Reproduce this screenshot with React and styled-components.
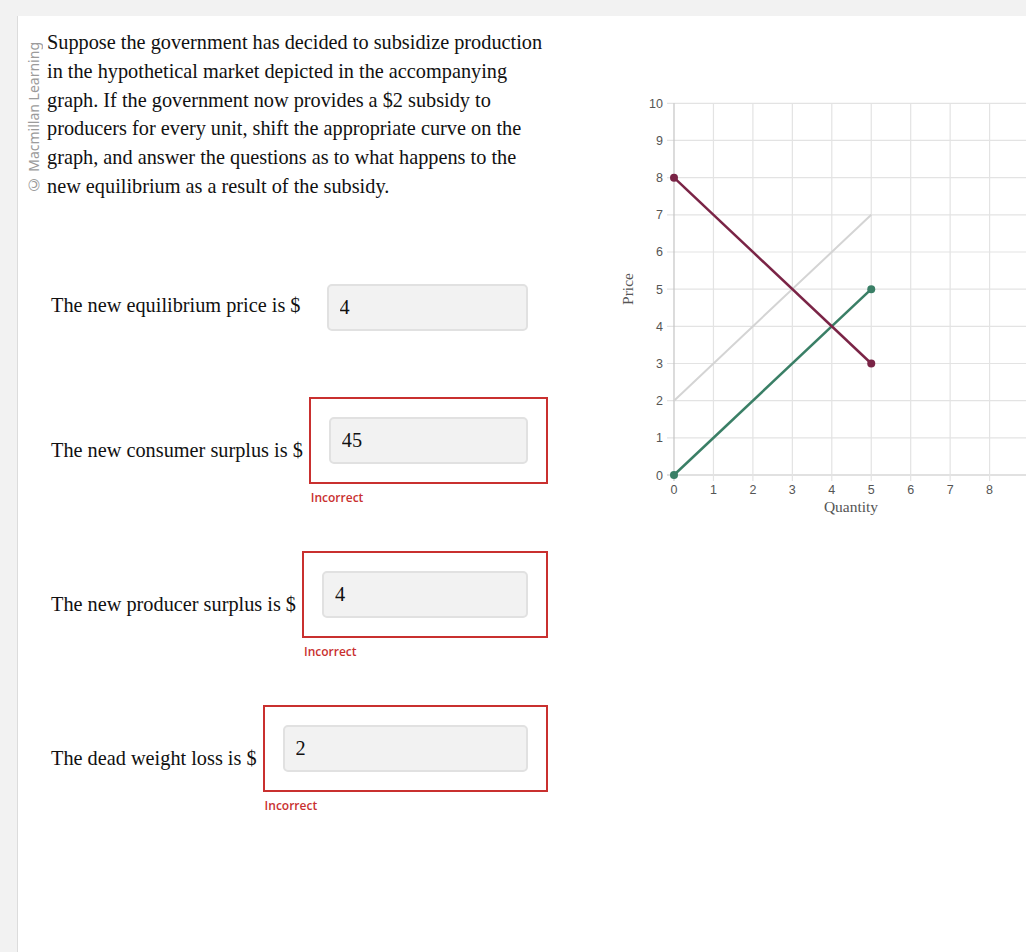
import React from "react";
import styled, { createGlobalStyle } from "styled-components";

const GlobalStyle = createGlobalStyle`
  html, body {
    margin: 0;
    padding: 0;
    background: #f2f2f2;
    overflow: hidden;
  }
  * { box-sizing: border-box; }
`;

const Page = styled.div`
  padding: 16px 0 0 17px;
  min-height: 952px;
`;

const Panel = styled.div`
  display: flex;
  align-items: flex-start;
  background: #ffffff;
  border-left: 1px solid #dcdcdc;
  min-height: 936px;
  width: 1009px;
  overflow: hidden;
`;

const Credit = styled.div`
  flex: 0 0 29px;
  display: flex;
  justify-content: center;
  padding: 26px 0 0 3px;
`;

const CreditText = styled.span`
  writing-mode: vertical-rl;
  transform: rotate(180deg);
  font-family: "Noto Sans", "Open Sans", "Liberation Sans", sans-serif;
  font-size: 14px;
  line-height: 14px;
  color: #9b9b9b;
  white-space: nowrap;
`;

const CopySign = styled.span`
  font-family: "DejaVu Sans", "Liberation Sans", sans-serif;
  font-size: 15px;
`;

const LeftCol = styled.div`
  flex: 0 0 513px;
  display: flex;
  flex-direction: column;
`;

const Prompt = styled.p`
  margin: 12px 0 0;
  width: 500px;
  font-family: "Liberation Serif", "Times New Roman", serif;
  font-size: 20.3px;
  line-height: 28.8px;
  color: #111;
`;

const QuestionList = styled.div`
  margin-top: 63px;
  display: flex;
  flex-direction: column;
  gap: 46px;
  width: 501px;
`;

const Row = styled.div`
  display: flex;
  align-items: flex-start;
  padding-left: 4px;
`;

const Label = styled.span`
  padding-top: ${(p) => p.$drop}px;
  font-family: "Liberation Serif", "Times New Roman", serif;
  font-size: 20.3px;
  line-height: 24px;
  color: #111;
  white-space: nowrap;
`;

const FieldCol = styled.div`
  flex: 1;
  margin-left: 6px;
  display: flex;
  flex-direction: column;
`;

const FieldBox = styled.div`
  border: 2px solid ${(p) => (p.$wrong ? "#c9302f" : "transparent")};
  padding: 18px;
`;

const AnswerInput = styled.input`
  display: block;
  width: 100%;
  height: 47px;
  margin: 0;
  padding: 0 11px;
  border: 2px solid #e1e1e1;
  border-radius: 5px;
  background: #f2f2f2;
  font-family: "Liberation Serif", "Times New Roman", serif;
  font-size: 20.3px;
  color: #111;
  outline: none;
`;

const Feedback = styled.div`
  margin-top: 6px;
  padding-left: 2px;
  font-family: "Open Sans", "Liberation Sans", sans-serif;
  font-weight: 600;
  font-size: 12px;
  line-height: 15px;
  color: #c9302f;
`;

const GraphCol = styled.div`
  flex: 0 0 426px;
  margin: 64px 0 0 40px;
`;

const GraphSvg = styled.svg`
  display: block;
`;

const X0 = 74;
const UX = 39.45;
const Y0 = 395;
const UY = 37.17;
const px = (q) => X0 + q * UX;
const py = (p) => Y0 - p * UY;

const questions = [
  { label: "The new equilibrium price is $", value: "4", wrong: false },
  { label: "The new consumer surplus is $", value: "45", wrong: true },
  { label: "The new producer surplus is $", value: "4", wrong: true },
  { label: "The dead weight loss is $", value: "2", wrong: true },
];

function Curve({ from, to, color, dots, width = 2.5 }) {
  return (
    <g>
      <line
        x1={px(from[0])}
        y1={py(from[1])}
        x2={px(to[0])}
        y2={py(to[1])}
        stroke={color}
        strokeWidth={width}
      />
      {dots && (
        <>
          <circle cx={px(from[0])} cy={py(from[1])} r="4" fill={color} />
          <circle cx={px(to[0])} cy={py(to[1])} r="4" fill={color} />
        </>
      )}
    </g>
  );
}

function Graph() {
  const ps = Array.from({ length: 11 }, (_, i) => i);
  const qs = Array.from({ length: 10 }, (_, i) => i);
  return (
    <GraphSvg width="426" height="440" viewBox="0 0 426 440">
      {ps.map((p) => (
        <line
          key={"h" + p}
          x1={67}
          x2={426}
          y1={py(p)}
          y2={py(p)}
          stroke={p === 0 ? "#c4c4c4" : "#e3e3e3"}
          strokeWidth="1.2"
        />
      ))}
      {qs.map((q) => (
        <line
          key={"v" + q}
          x1={px(q)}
          x2={px(q)}
          y1={py(10)}
          y2={py(0) + 6}
          stroke={q === 0 ? "#c4c4c4" : "#e3e3e3"}
          strokeWidth="1.2"
        />
      ))}
      {ps.map((p) => (
        <text
          key={"yl" + p}
          x={63}
          y={py(p) + 4.5}
          textAnchor="end"
          fontFamily="Liberation Sans, Arial, sans-serif"
          fontSize="12.5"
          fill="#555"
        >
          {p}
        </text>
      ))}
      {qs.slice(0, 9).map((q) => (
        <text
          key={"xl" + q}
          x={px(q)}
          y={py(0) + 19}
          textAnchor="middle"
          fontFamily="Liberation Sans, Arial, sans-serif"
          fontSize="12.5"
          fill="#555"
        >
          {q}
        </text>
      ))}
      <text
        x={251}
        y={432}
        textAnchor="middle"
        fontFamily="Liberation Serif, Times New Roman, serif"
        fontSize="15.5"
        fill="#555"
      >
        Quantity
      </text>
      <text
        transform="translate(33 209) rotate(-90)"
        textAnchor="middle"
        fontFamily="Liberation Serif, Times New Roman, serif"
        fontSize="15.5"
        fill="#555"
      >
        Price
      </text>
      <Curve from={[0, 2]} to={[5, 7]} color="#d4d4d4" width={2} />
      <Curve from={[0, 0]} to={[5, 5]} color="#3a7f66" dots />
      <Curve from={[0, 8]} to={[5, 3]} color="#7a2446" dots />
    </GraphSvg>
  );
}

export default function App() {
  return (
    <>
      <GlobalStyle />
      <Page>
        <Panel>
          <Credit>
            <CreditText>
              <CopySign>©</CopySign> Macmillan Learning
            </CreditText>
          </Credit>
          <LeftCol>
            <Prompt>
              Suppose the government has decided to subsidize production in the
              hypothetical market depicted in the accompanying graph. If the
              government now provides a $2 subsidy to producers for every unit,
              shift the appropriate curve on the graph, and answer the questions
              as to what happens to the new equilibrium as a result of the
              subsidy.
            </Prompt>
            <QuestionList>
              {questions.map((q) => (
                <Row key={q.label}>
                  <Label $drop={q.wrong ? 41 : 29}>{q.label}</Label>
                  <FieldCol>
                    <FieldBox $wrong={q.wrong}>
                      <AnswerInput readOnly defaultValue={q.value} />
                    </FieldBox>
                    {q.wrong && <Feedback>Incorrect</Feedback>}
                  </FieldCol>
                </Row>
              ))}
            </QuestionList>
          </LeftCol>
          <GraphCol>
            <Graph />
          </GraphCol>
        </Panel>
      </Page>
    </>
  );
}
